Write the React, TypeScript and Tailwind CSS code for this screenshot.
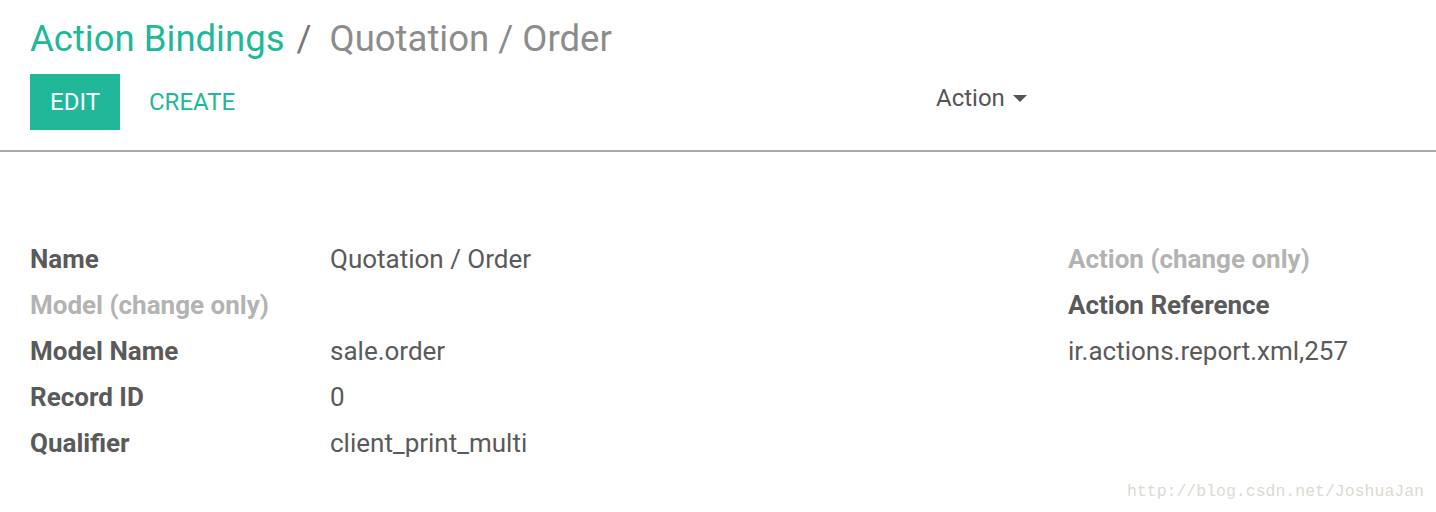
import React from 'react';

const leftRows: { label: string; value?: string; muted?: boolean }[] = [
  { label: 'Name', value: 'Quotation / Order' },
  { label: 'Model (change only)', muted: true },
  { label: 'Model Name', value: 'sale.order' },
  { label: 'Record ID', value: '0' },
  { label: 'Qualifier', value: 'client_print_multi' },
];

export default function App() {
  return (
    <div className="relative w-[1436px] h-[512px] overflow-hidden bg-white font-['Roboto',sans-serif] text-[#555]">
      {/* control panel */}
      <div className="px-[30px] pt-[18px]">
        <div className="flex items-baseline text-[36.5px] leading-[42px]">
          <span className="text-[#21b799]">Action Bindings</span>
          <span className="ml-[12px] mr-[18px] text-[#777]">/</span>
          <span className="text-[#8c8c8c]">Quotation / Order</span>
        </div>
        <div className="mt-[14px] flex items-start h-[56px]">
          <div className="flex items-center w-[906px] h-[56px]">
            <button className="h-[56px] w-[90px] bg-[#21b799] text-white text-[24px] leading-[28px]">
              EDIT
            </button>
            <button className="ml-[29px] text-[#21b799] text-[24px] leading-[28px]">CREATE</button>
          </div>
          <div className="mt-[10px] flex items-center text-[24px] leading-[28px] text-[#555]">
            <span>Action</span>
            <svg className="ml-[8px] mt-[2px]" width="14" height="8" viewBox="0 0 14 8">
              <path d="M0 0 L14 0 L7 7 Z" fill="#555" />
            </svg>
          </div>
        </div>
      </div>
      <div className="mt-[20px] h-[2px] bg-[#a9a9a9]" />

      {/* form sheet */}
      <div className="flex px-[30px] pt-[84px] text-[26px] leading-[46px]">
        <div className="w-[1038px]">
          {leftRows.map((r) => (
            <div key={r.label} className="flex h-[46px]">
              <div className={`w-[300px] font-bold ${r.muted ? 'text-[#b3b3b3]' : 'text-[#5a5a5a]'}`}>
                {r.label}
              </div>
              <div className="text-[#5a5a5a]">{r.value}</div>
            </div>
          ))}
        </div>
        <div>
          <div className="h-[46px] font-bold text-[#b3b3b3]">Action (change only)</div>
          <div className="h-[46px] font-bold text-[#5a5a5a]">Action Reference</div>
          <div className="h-[46px] text-[#5a5a5a]">ir.actions.report.xml,257</div>
        </div>
      </div>

      <div className="absolute right-[12px] bottom-[10px] font-['Liberation_Mono',monospace] text-[16.5px] leading-[20px] text-[#dcd9d2]">
        http://blog.csdn.net/JoshuaJan
      </div>
    </div>
  );
}
